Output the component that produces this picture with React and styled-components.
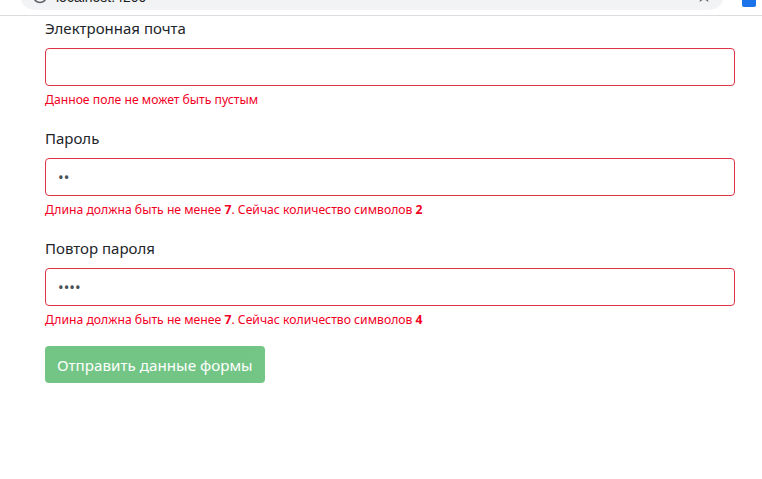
import styled, { createGlobalStyle } from "styled-components";

const GlobalStyle = createGlobalStyle`
    html, body {
        margin: 0;
        padding: 0;
        background: #fff;
    }
    body {
        font-family: "Noto Sans", "Open Sans", sans-serif;
        color: #212529;
    }
`;

const Chrome = styled.div`
    box-sizing: border-box;
    height: 16px;
    border-bottom: 1px solid #dadce0;
    display: flex;
    align-items: flex-end;
    padding: 0 6px 5px 20px;
    gap: 18px;
    overflow: hidden;
`;

const Omnibox = styled.div`
    flex: 1;
    flex-shrink: 0;
    box-sizing: border-box;
    height: 30px;
    min-height: 30px;
    background: #f1f3f4;
    border-radius: 15px;
    display: flex;
    align-items: flex-end;
    padding: 0 12px 6px 12px;
    gap: 8px;
    font-family: "Liberation Sans", Arial, sans-serif;
    font-size: 14px;
    line-height: 14px;
    color: #202124;
`;

const Url = styled.span`
    flex: 1;
`;

const Container = styled.div`
    width: 690px;
    padding: 0 0 0 45px;
`;

const Group = styled.div`
    margin-bottom: 17px;
`;

const Label = styled.label`
    display: block;
    font-size: 15px;
    line-height: 24px;
    margin-bottom: 8px;
`;

const Input = styled.input`
    display: block;
    box-sizing: border-box;
    width: 100%;
    height: 38px;
    padding: 6px 12px;
    border: 1px solid #dc3545;
    border-radius: 4px;
    font-size: 15px;
    color: #495057;
    outline: none;
    font-family: inherit;
`;

const Feedback = styled.div`
    margin-top: 4px;
    font-size: 12.2px;
    line-height: 19px;
    color: #f2001f;

    b {
        font-weight: 700;
    }
`;

const Submit = styled.button`
    height: 37px;
    padding: 0 12px;
    border: none;
    border-radius: 4px;
    background: #28a745;
    opacity: 0.65;
    color: #fff;
    font-size: 15.2px;
    font-family: inherit;
`;

export default function App() {
    return (
        <>
            <GlobalStyle />
            <Chrome>
                <Omnibox>
                    <svg width="16" height="16" viewBox="0 0 16 16">
                        <circle cx="8" cy="8" r="6.5" fill="none" stroke="#5f6368" strokeWidth="1.5" />
                    </svg>
                    <Url>localhost:4200</Url>
                    <svg width="16" height="16" viewBox="0 0 16 16">
                        <path d="M8 1l2 5h5l-4 3 1.5 5L8 11l-4.5 3L5 9 1 6h5z" fill="#5f6368" />
                    </svg>
                </Omnibox>
                <svg width="14" height="16" viewBox="0 0 14 16">
                    <rect x="0" y="0" width="14" height="13" rx="2" fill="#1a73e8" />
                </svg>
            </Chrome>
            <Container>
                <Group>
                    <Label>Электронная почта</Label>
                    <Input type="email" />
                    <Feedback>Данное поле не может быть пустым</Feedback>
                </Group>
                <Group>
                    <Label>Пароль</Label>
                    <Input type="password" defaultValue="ab" />
                    <Feedback>
                        Длина должна быть не менее <b>7</b>. Сейчас количество символов <b>2</b>
                    </Feedback>
                </Group>
                <Group>
                    <Label>Повтор пароля</Label>
                    <Input type="password" defaultValue="abcd" />
                    <Feedback>
                        Длина должна быть не менее <b>7</b>. Сейчас количество символов <b>4</b>
                    </Feedback>
                </Group>
                <Submit disabled>Отправить данные формы</Submit>
            </Container>
        </>
    );
}
